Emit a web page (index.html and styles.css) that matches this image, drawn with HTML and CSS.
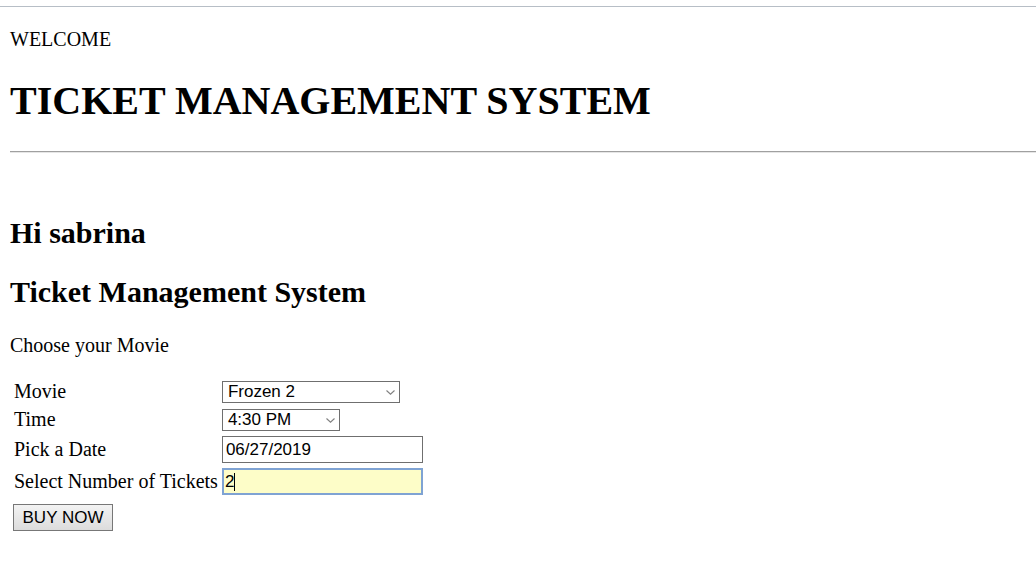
FILE: index.html
```html
<!DOCTYPE html>
<html>
<head>
<meta charset="utf-8">
<link rel="stylesheet" href="styles.css">
</head>
<body>
<div class="topline"></div>
<div class="page">
  <p class="welcome">WELCOME</p>
  <h1 class="title">TICKET MANAGEMENT SYSTEM</h1>
  <hr class="rule">
  <h2 class="hi">Hi sabrina</h2>
  <h2 class="sub">Ticket Management System</h2>
  <p class="choose">Choose your Movie</p>
  <table class="form">
    <tr>
      <td class="label">Movie</td>
      <td><div class="select movie"><span>Frozen 2</span><svg class="chev" viewBox="0 0 9 5" width="9" height="5"><path d="M0.5 0.5 L4.5 4.2 L8.5 0.5" fill="none" stroke="#808080" stroke-width="1.1"/></svg></div></td>
    </tr>
    <tr>
      <td class="label">Time</td>
      <td><div class="select time"><span>4:30 PM</span><svg class="chev" viewBox="0 0 9 5" width="9" height="5"><path d="M0.5 0.5 L4.5 4.2 L8.5 0.5" fill="none" stroke="#808080" stroke-width="1.1"/></svg></div></td>
    </tr>
    <tr>
      <td class="label">Pick a Date</td>
      <td><div class="input date">06/27/2019</div></td>
    </tr>
    <tr>
      <td class="label">Select Number of Tickets</td>
      <td><div class="input num">2<span class="caret"></span></div></td>
    </tr>
  </table>
  <div class="btn">BUY NOW</div>
</div>
</body>
</html>
```
FILE: styles.css
```css
html, body {
  margin: 0;
  padding: 0;
  background: #ffffff;
}
body {
  font-family: "Liberation Serif", "Times New Roman", serif;
  color: #000;
  font-size: 20px;
}
.topline {
  margin-top: 6px;
  height: 1px;
  background: #b7bec6;
}
.page {
  padding: 0 0 0 10px;
}
.welcome {
  margin: 21px 0 0 0;
  font-size: 20px;
  line-height: 23px;
}
.title {
  margin: 27px 0 0 0;
  font-size: 40px;
  line-height: 46px;
  font-weight: bold;
}
.rule {
  margin: 27px 0 0 0;
  border: 0;
  border-top: 1px solid #a0a0a0;
  height: 0;
  box-shadow: 0 1px 0 #e6e6e6;
}
.hi {
  margin: 64px 0 0 0;
  font-size: 30px;
  line-height: 34px;
}
.sub {
  margin: 25px 0 0 0;
  font-size: 30px;
  line-height: 34px;
}
.choose {
  margin: 25px 0 0 0;
  line-height: 23px;
}
.form {
  margin-top: 19px;
  border-collapse: separate;
  border-spacing: 2px 3px;
  margin-left: 1px;
}
.form td {
  padding: 1px;
  vertical-align: middle;
}
.label {
  line-height: 23px;
  white-space: nowrap;
}
.select, .input {
  font-family: "Liberation Sans", Arial, sans-serif;
  font-size: 17px;
  box-sizing: border-box;
  display: flex;
  align-items: center;
  border: 1px solid #6f6f6f;
  background: #fff;
}
.select {
  height: 22px;
  padding: 0 4px 0 5px;
  justify-content: space-between;
}
.chev {
  margin-top: 1px;
}
.movie { width: 178px; }
.time { width: 118px; }
.input {
  width: 201px;
  height: 27px;
  padding: 0 3px;
}
.num {
  background: #fdfdc8;
  border: 2px solid #7fa3d3;
  padding: 0 1px;
}
.caret {
  display: inline-block;
  width: 1px;
  height: 18px;
  background: #000;
  margin-left: 0;
}
.btn {
  display: inline-flex;
  align-items: center;
  justify-content: center;
  box-sizing: border-box;
  width: 100px;
  height: 27px;
  margin: 5px 0 0 3px;
  font-family: "Liberation Sans", Arial, sans-serif;
  font-size: 17px;
  border: 1px solid #777;
  background: linear-gradient(#f3f3f3, #dcdcdc);
}
```
